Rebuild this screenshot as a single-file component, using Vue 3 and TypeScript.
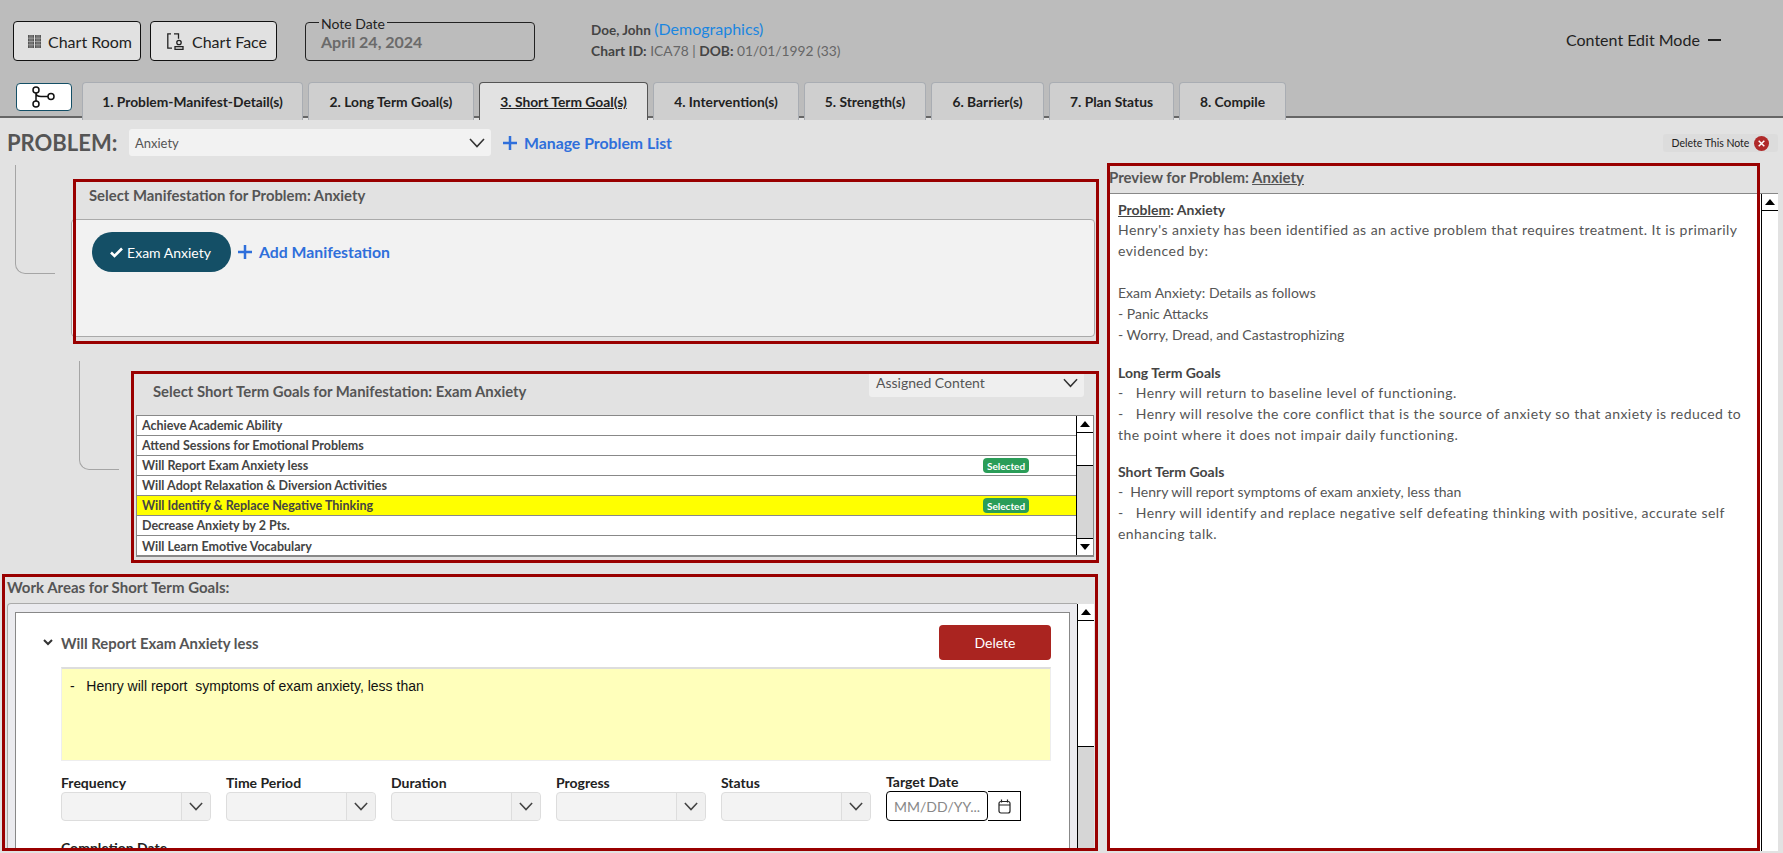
<script setup lang="ts">
const tabs = ['1. Problem-Manifest-Detail(s)', '2. Long Term Goal(s)', '3. Short Term Goal(s)', '4. Intervention(s)', '5. Strength(s)', '6. Barrier(s)', '7. Plan Status', '8. Compile']
const goals = [
  { name: 'Achieve Academic Ability', selected: false, active: false },
  { name: 'Attend Sessions for Emotional Problems', selected: false, active: false },
  { name: 'Will Report Exam Anxiety less', selected: true, active: false },
  { name: 'Will Adopt Relaxation & Diversion Activities', selected: false, active: false },
  { name: 'Will Identify & Replace Negative Thinking', selected: true, active: true },
  { name: 'Decrease Anxiety by 2 Pts.', selected: false, active: false },
  { name: 'Will Learn Emotive Vocabulary', selected: false, active: false }
]
const fields = ['Frequency', 'Time Period', 'Duration', 'Progress', 'Status']
</script>

<template>
  <div class="page">
    <header class="top">
      <div class="top-row">
        <button class="tool tool-room">
          <svg width="13" height="13" viewBox="0 0 13 13" fill="#555"><rect x="0" y="0" width="6" height="13" /><rect x="7" y="0" width="6" height="13" /><path d="M0 3.200h6M7 3.200h6M0 6.500h6M7 6.500h6M0 9.800h6M7 9.800h6M2 0v13M4 0v13M9 0v13M11 0v13" stroke="#bbb" stroke-width=".6" /></svg>
          Chart Room
        </button>
        <button class="tool tool-face">
          <svg width="17" height="17" viewBox="0 0 17 17" fill="none" stroke="#222" stroke-width="1.300"><path d="M4 .8H.8v14.400H5M7 .8h4.500v5" /><circle cx="12" cy="9.500" r="2.200" /><path d="M8 16.500v-2.800h8v2.800z" /></svg>
          Chart Face
        </button>
        <fieldset class="note-date">
          <legend>Note Date</legend>
          <div class="date-value">April 24, 2024</div>
        </fieldset>
        <div class="patient">
          <div class="p-one"><b>Doe, John</b> <a>(Demographics)</a></div>
          <div class="p-two"><b>Chart ID:</b> ICA78 | <b>DOB:</b> 01/01/1992 (33)</div>
        </div>
        <div class="edit-mode">Content Edit Mode <i class="dash"></i></div>
      </div>
      <div class="tab-row">
        <button class="flow-btn">
          <svg width="24" height="22" viewBox="0 0 24 22" fill="none" stroke="#111" stroke-width="1.500"><circle cx="4" cy="4" r="3" /><circle cx="4" cy="18" r="3" /><circle cx="19" cy="10.500" r="3" /><path d="M4 7v8M4 7c0 2.500 2 3.500 5 3.500h7" /></svg>
        </button>
        <div class="tabs">
          <div v-for="(t, i) in tabs" :key="t" class="tab" :class="{ 'tab-on': i === 2 }">{{ t }}</div>
        </div>
      </div>
    </header>

    <main class="main">
      <div class="problem-row">
        <span class="problem-label">PROBLEM:</span>
        <div class="problem-select">
          <span>Anxiety</span>
          <svg class="chev" width="16" height="10" viewBox="0 0 16 10" fill="none" stroke="#333" stroke-width="1.600"><path d="M1 1l7 7.500L15 1" /></svg>
        </div>
        <a class="add-link">
          <svg width="14" height="14" viewBox="0 0 14 14" stroke="#2f6fdb" stroke-width="2.500"><path d="M7 0v14M0 7h14" /></svg>
          Manage Problem List
        </a>
        <div class="delete-note">Delete This Note
          <svg width="16" height="16" viewBox="0 0 16 16"><circle cx="8" cy="8" r="8" fill="#b02a2a" /><path d="M5 5l6 6M11 5l-6 6" stroke="#fff" stroke-width="1.600" /></svg>
        </div>
      </div>

      <div class="left">
        <div class="flow flow-a">
          <div class="conn conn-a"></div>
          <section class="box manifest">
            <h3 class="box-head">Select Manifestation for Problem: Anxiety</h3>
            <div class="panel">
              <span class="pill">
                <svg width="13" height="11" viewBox="0 0 13 11" fill="none" stroke="#fff" stroke-width="2.600"><path d="M1 5.500l3.500 3.500L12 1.500" /></svg>
                Exam Anxiety
              </span>
              <a class="add-link">
                <svg width="14" height="14" viewBox="0 0 14 14" stroke="#2f6fdb" stroke-width="2.500"><path d="M7 0v14M0 7h14" /></svg>
                Add Manifestation
              </a>
            </div>
          </section>
        </div>

        <div class="flow flow-b">
          <div class="conn conn-b"></div>
          <section class="box goals">
            <div class="goals-head">
              <h3>Select Short Term Goals for Manifestation: Exam Anxiety</h3>
              <div class="assigned">
                <span>Assigned Content</span>
                <svg width="15" height="10" viewBox="0 0 16 10" fill="none" stroke="#333" stroke-width="1.600"><path d="M1 1l7 7.500L15 1" /></svg>
              </div>
            </div>
            <div class="list">
              <div class="rows">
                <div v-for="g in goals" :key="g.name" class="row" :class="{ 'row-on': g.active }">
                  <span class="row-name">{{ g.name }}</span>
                  <span v-if="g.selected" class="badge">Selected</span>
                </div>
              </div>
              <div class="sb sb-list">
                <div class="sb-up"><i></i></div>
                <div class="sb-thumb sb-thumb-list"></div>
                <div class="sb-track"></div>
                <div class="sb-down"><i></i></div>
              </div>
            </div>
          </section>
        </div>

        <section class="box work">
          <h3 class="work-head">Work Areas for Short Term Goals:</h3>
          <div class="work-body">
            <div class="work-frame">
              <div class="card">
                <div class="card-head">
                  <div class="card-title">
                    <svg width="10" height="7" viewBox="0 0 10 7" fill="none" stroke="#333" stroke-width="2"><path d="M1 1l4 4 4-4" /></svg>
                    <span>Will Report Exam Anxiety less</span>
                  </div>
                  <button class="del-btn">Delete</button>
                </div>
                <div class="note">-&nbsp;&nbsp; Henry will report&nbsp; symptoms of exam anxiety, less than</div>
                <div class="fields">
                  <div v-for="f in fields" :key="f" class="field">
                    <label>{{ f }}</label>
                    <div class="sel"><span class="sel-box"></span><span class="sel-btn">
                      <svg width="14" height="9" viewBox="0 0 16 10" fill="none" stroke="#444" stroke-width="1.800"><path d="M1 1l7 7.500L15 1" /></svg>
                    </span></div>
                  </div>
                  <div class="field field-date">
                    <label>Target Date</label>
                    <div class="date-wrap">
                      <span class="date-input">MM/DD/YY...</span>
                      <span class="date-btn">
                        <svg width="13" height="15" viewBox="0 0 13 15" fill="none" stroke="#222" stroke-width="1.200"><rect x="1" y="2.500" width="11" height="11.500" rx="2" /><path d="M1 6h11M3.500 .5v3M9.500 .5v3" /></svg>
                      </span>
                    </div>
                  </div>
                </div>
                <label class="completion">Completion Date</label>
              </div>
            </div>
            <div class="sb sb-work">
              <div class="sb-up"><i></i></div>
              <div class="sb-thumb sb-thumb-work"></div>
              <div class="sb-track"></div>
            </div>
          </div>
        </section>
      </div>

      <aside class="box preview">
        <h3 class="preview-head">Preview for Problem: <u>Anxiety</u></h3>
        <div class="preview-body">
          <div class="preview-text">
            <p class="strong"><u>Problem</u>: Anxiety</p>
            <p class="wide">Henry's anxiety has been identified as an active problem that requires treatment. It is primarily evidenced by:</p>
            <p class="spaced"></p>
            <p>Exam Anxiety: Details as follows</p>
            <p>- Panic Attacks</p>
            <p>- Worry, Dread, and Castastrophizing</p>
            <p class="strong sect-a">Long Term Goals</p>
            <p class="wide">-&nbsp;&nbsp; Henry will return to baseline level of functioning.</p>
            <p class="wide">-&nbsp;&nbsp; Henry will resolve the core conflict that is the source of anxiety so that anxiety is reduced to the point where it does not impair daily functioning.</p>
            <p class="strong sect-b">Short Term Goals</p>
            <p>-&nbsp; Henry will report symptoms of exam anxiety, less than</p>
            <p class="wide">-&nbsp;&nbsp; Henry will identify and replace negative self defeating thinking with positive, accurate self enhancing talk.</p>
          </div>
          <div class="sb sb-preview">
            <div class="sb-up"><i></i></div>
          </div>
        </div>
      </aside>
    </main>
  </div>
</template>

<style scoped>
.page { width: 1783px; height: 853px; overflow: hidden; background: #e2e2e2; font-family: Lato, "Noto Sans", sans-serif; color: #555; box-sizing: border-box; }
.top { height: 118px; box-sizing: border-box; background: #bcbcbc; border-bottom: 2px solid #666; padding: 21px 0 0 13px; }
.top-row { display: flex; align-items: flex-start; height: 61px; }
.tool { height: 40px; box-sizing: border-box; background: #e1e1e1; border: 1px solid #111; border-radius: 4px; font: 16px Lato, sans-serif; color: #222; display: flex; align-items: center; padding: 0; }
.tool-room { width: 128px; padding-left: 14px; gap: 7px; }
.tool-face { width: 127px; margin-left: 9px; padding-left: 16px; gap: 8px; }
.note-date { margin: -9px 0 0 28px; padding: 0 0 0 15px; width: 230px; height: 49px; box-sizing: border-box; border: 1px solid #222; border-radius: 4px; }
.note-date legend { font-size: 14px; line-height: 16px; color: #222; padding: 4px 2px 0; margin-left: -2px; }
.date-value { font-size: 16px; font-weight: 700; color: #6a6a6a; line-height: 20px; }
.patient { margin: 0 0 0 56px; font-size: 13.500px; color: #666; }
.patient b { color: #444; }
.p-one { line-height: 18px; margin-top: -1px; }
.p-one a { color: #1a86e0; font-size: 16px; }
.p-two { line-height: 18px; margin-top: 3px; font-size: 13.800px; }
.edit-mode { position: absolute; left: 1566px; top: 30px; font-size: 16px; color: #222; line-height: 20px; display: flex; align-items: center; gap: 8px; }
.dash { display: block; width: 13px; height: 2px; background: #222; }
.tab-row { display: flex; align-items: flex-start; margin-left: 3px; }
.flow-btn { width: 56px; height: 28px; margin-top: 1px; box-sizing: border-box; background: #fff; border: 1px solid #144f66; border-radius: 4px; display: flex; align-items: center; justify-content: center; padding: 0; }
.tabs { display: grid; grid-template-columns: 221px 166px 169px 146px 122px 113px 125px 107px; column-gap: 5px; margin-left: 10px; height: 35px; }
.tab { background: #cfcfcf; border: 1px solid #a9adb3; border-bottom: 0; border-radius: 4px 4px 0 0; display: flex; align-items: center; justify-content: center; font-size: 13.800px; font-weight: 700; color: #222; }
.tab-on { background: #e2e2e2; border-color: #555; height: 37px; text-decoration: underline; position: relative; }

.main { display: grid; grid-template-columns: 1107px 676px; grid-template-rows: 45px 1fr; height: 735px; }
.problem-row { grid-column: 1 / -1; display: flex; align-items: flex-start; padding: 11px 5px 0 7px; position: relative; }
.problem-label { font-size: 22px; font-weight: 700; color: #555; line-height: 28px; width: 122px; }
.problem-select { width: 362px; height: 27px; box-sizing: border-box; background: #f2f2f2; border-radius: 3px; display: flex; align-items: center; justify-content: space-between; padding: 0 6px; font-size: 13px; color: #555; }
.add-link { color: #2f6fdb; font-size: 15.800px; font-weight: 700; display: inline-flex; align-items: center; gap: 7px; }
.problem-row .add-link { margin-left: 12px; height: 27px; }
.delete-note { margin-left: auto; width: 115px; height: 18px; margin-top: 5px; box-sizing: border-box; background: #dcdcdc; border-radius: 3px; font-size: 10.500px; color: #222; display: flex; align-items: center; justify-content: center; gap: 5px; }
.delete-note svg { width: 15px; height: 15px; }

.left { min-width: 0; height: 690px; overflow: hidden; }
.flow { display: flex; align-items: flex-start; }
.conn { width: 40px; height: 109px; box-sizing: border-box; border-left: 1px solid #a5a5a5; border-bottom: 1px solid #a5a5a5; border-radius: 0 0 0 10px; flex: none; }
.conn-a { margin: 2px 0 0 15px; }
.conn-b { margin: -10px 0 0 79px; }
.box { position: relative; box-sizing: border-box; padding: 0; flex: none; }
.box::after { content: ""; position: absolute; inset: 0; border: 3px solid #990000; pointer-events: none; }
.manifest { width: 1026px; height: 165px; margin: 16px 0 0 18px; }
.box-head { margin: 0; height: 40px; box-sizing: border-box; padding: 7px 0 0 16px; font-size: 14.850px; line-height: 18px; font-weight: 700; color: #555; }
.panel { height: 118px; box-sizing: border-box; margin: 0 4px 0 -2px; background: #f2f2f2; border: 1px solid #aaa; border-radius: 4px; padding: 12px 0 0 20px; display: flex; align-items: flex-start; gap: 7px; }
.pill { width: 139px; height: 40px; border-radius: 20px; background: #144f66; color: #fff; font-size: 14px; display: flex; align-items: center; justify-content: center; gap: 4px; padding-right: 2px; box-sizing: border-box; }
.panel .add-link { height: 39px; font-size: 15.800px; gap: 7px; }
.flow-b { margin-top: 27px; }
.goals { width: 968px; height: 192px; margin-left: 12px; }
.goals-head { height: 44px; display: flex; justify-content: space-between; align-items: flex-start; padding: 0 15px 0 22px; }
.goals-head h3 { margin: 11px 0 0; font-size: 14.850px; line-height: 18px; font-weight: 700; color: #555; }
.assigned { width: 215px; height: 26px; box-sizing: border-box; background: #efefef; border-radius: 0 0 3px 3px; display: flex; align-items: center; justify-content: space-between; padding: 0 6px 3px 7px; font-size: 14px; color: #555; }
.list { margin: 0 5px; height: 142px; box-sizing: border-box; border: 1px solid #888; border-bottom-width: 2px; background: #fff; display: flex; }
.rows { flex: 1; }
.row { height: 20px; box-sizing: border-box; border-bottom: 1px solid #888; display: flex; align-items: center; padding-left: 5px; font-size: 12.500px; font-weight: 700; color: #444; }
.row:last-child { border-bottom: 0; }
.row-on { background: #ffff00; }
.row-name { width: 841px; flex: none; }
.badge { width: 46px; height: 15px; background: #2a9d58; border-radius: 4px; color: #fff; font-size: 10px; font-weight: 700; display: flex; align-items: center; justify-content: center; }
.sb { width: 17px; flex: none; box-sizing: border-box; border-left: 1px solid #000; display: flex; flex-direction: column; background: #fff; }
.sb-up, .sb-down { height: 16px; flex: none; background: #fff; display: flex; align-items: center; justify-content: center; }
.sb-up { border-bottom: 1px solid #000; }
.sb-down { border-top: 1px solid #000; }
.sb-up i { width: 0; height: 0; border: 5.500px solid transparent; border-top: 0; border-bottom: 6px solid #000; }
.sb-down i { width: 0; height: 0; border: 5.500px solid transparent; border-bottom: 0; border-top: 6px solid #000; }
.sb-thumb { background: #fff; flex: none; border-bottom: 1px solid #000; }
.sb-thumb-list { height: 32px; }
.sb-thumb-work { height: 125px; }
.sb-track { flex: 1; background: #d6d6d6; }

.work { width: 1096px; height: 277px; margin: 11px 0 0 2px; overflow: hidden; }
.work-head { margin: 0; height: 29px; box-sizing: border-box; padding: 4px 0 0 5px; font-size: 15px; line-height: 18px; font-weight: 700; color: #555; }
.work-body { display: flex; margin: 0 4px 0 5px; height: 248px; }
.work-frame { flex: 1; box-sizing: border-box; background: #ebebef; border: 1px solid #aaa; border-bottom: 0; border-right: 0; border-radius: 4px 0 0 0; padding: 8px 7px 0 7px; overflow: hidden; }
.card { background: #fff; border: 1px solid #888; border-bottom: 0; height: 260px; box-sizing: border-box; padding: 12px 18px 0 27px; }
.card-head { display: flex; justify-content: space-between; align-items: center; height: 35px; }
.card-title { display: flex; align-items: center; gap: 8px; font-size: 14.850px; font-weight: 700; color: #555; }
.del-btn { width: 112px; height: 35px; border: 0; border-radius: 4px; background: #aa2420; color: #fff; font: 14px Lato, sans-serif; padding: 0; }
.note { margin: 7px 0 0 18px; height: 94px; box-sizing: border-box; background: #ffffbb; border: 1px solid #eee; border-top: 2px solid #ddd; padding: 8px 0 0 8px; font: 14px/18px "Liberation Sans", Arial, sans-serif; color: #111; }
.fields { display: grid; grid-template-columns: repeat(6, 150px); column-gap: 15px; margin: 13px 0 0 18px; }
.field label, .completion { display: block; font-size: 14px; font-weight: 700; color: #222; line-height: 18px; }
.sel { height: 29px; box-sizing: border-box; border: 1px solid #ddd; border-radius: 4px; background: #f3f3f3; display: flex; }
.sel-box { flex: 1; }
.sel-btn { width: 28px; border-left: 1px solid #ddd; display: flex; align-items: center; justify-content: center; background: #f0f0f0; border-radius: 0 4px 4px 0; }
.field-date { margin-top: -1px; }
.date-wrap { display: flex; height: 30px; }
.date-input { width: 102px; box-sizing: border-box; border: 1px solid #000; border-radius: 4px; font-size: 14px; color: #888; padding: 0 0 0 7px; display: flex; align-items: center; white-space: nowrap; background: #fff; }
.date-btn { width: 33px; box-sizing: border-box; border: 1px solid #000; border-left: 0; display: flex; align-items: center; justify-content: center; }
.completion { margin: 18px 0 0 18px; }
.sb-work { margin: 1px 0 0 0; }

.preview { width: 653px; height: 688px; }
.preview-head { margin: 0; height: 30px; box-sizing: border-box; padding: 5px 0 0 2px; font-size: 15px; line-height: 18px; font-weight: 700; color: #555; }
.preview-body { display: flex; margin: 0 -18px 0 0; height: 658px; background: #fff; border-top: 1px solid #888; box-sizing: border-box; width: 671px; }
.preview-text { width: 654px; flex: none; box-sizing: border-box; padding: 6px 17px 0 11px; font-size: 14px; line-height: 21px; color: #555; }
.preview-text p { margin: 0; }
.wide { letter-spacing: .45px; }
.preview-text .strong { font-weight: 700; color: #444; line-height: 19px; }
.spaced { height: 21px; }
.preview-text .sect-a { margin-top: 18px; }
.preview-text .sect-b { margin-top: 17px; }
</style>

<style>
html, body { margin: 0; padding: 0; overflow: hidden; }
</style>
